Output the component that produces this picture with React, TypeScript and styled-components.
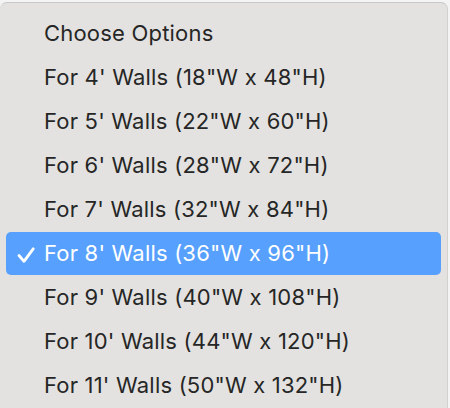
import React from "react";
import styled, { createGlobalStyle } from "styled-components";

const Global = createGlobalStyle`
  html, body { margin: 0; padding: 0; background: #f4f4f4; overflow: hidden; }
  body { font-family: Inter, "Noto Sans", "Liberation Sans", sans-serif; }
`;

const Page = styled.div`
  width: 450px;
  height: 408px;
  overflow: hidden;
  padding-top: 2px;
  box-sizing: border-box;
`;

const Menu = styled.ul`
  list-style: none;
  margin: 0;
  width: 448px;
  height: 420px;
  box-sizing: border-box;
  padding: 9px 0 0;
  background: #e3e2e0;
  border-top: 1px solid #c9c8c6;
  border-right: 1px solid #d2d1cf;
  border-radius: 7px 7px 0 0;
  display: flex;
  flex-direction: column;
  gap: 1px;
`;

const Item = styled.li<{ $selected?: boolean }>`
  height: 43px;
  box-sizing: border-box;
  padding-bottom: 2px;
  margin: 0 6px;
  border-radius: 5px;
  display: flex;
  align-items: center;
  position: relative;
  padding-left: 38px;
  font-size: 22px;
  letter-spacing: 0.2px;
  color: ${(p) => (p.$selected ? "#ffffff" : "#262626")};
  background: ${(p) => (p.$selected ? "#57a0fd" : "transparent")};
`;

const Check = styled.svg`
  position: absolute;
  left: 11px;
  top: 15px;
  width: 18px;
  height: 16px;
`;

const options = [
  "Choose Options",
  `For 4' Walls (18"W x 48"H)`,
  `For 5' Walls (22"W x 60"H)`,
  `For 6' Walls (28"W x 72"H)`,
  `For 7' Walls (32"W x 84"H)`,
  `For 8' Walls (36"W x 96"H)`,
  `For 9' Walls (40"W x 108"H)`,
  `For 10' Walls (44"W x 120"H)`,
  `For 11' Walls (50"W x 132"H)`,
];

export default function App() {
  return (
    <Page>
      <Global />
      <Menu>
        {options.map((o, i) => (
          <Item key={o} $selected={i === 5}>
            {i === 5 && (
              <Check viewBox="0 0 18 16">
                <path d="M2 8.5 L7 14.3 L16.2 1.8" fill="none" stroke="#fff" strokeWidth="2.8" strokeLinecap="round" strokeLinejoin="round" />
              </Check>
            )}
            {o}
          </Item>
        ))}
      </Menu>
    </Page>
  );
}
